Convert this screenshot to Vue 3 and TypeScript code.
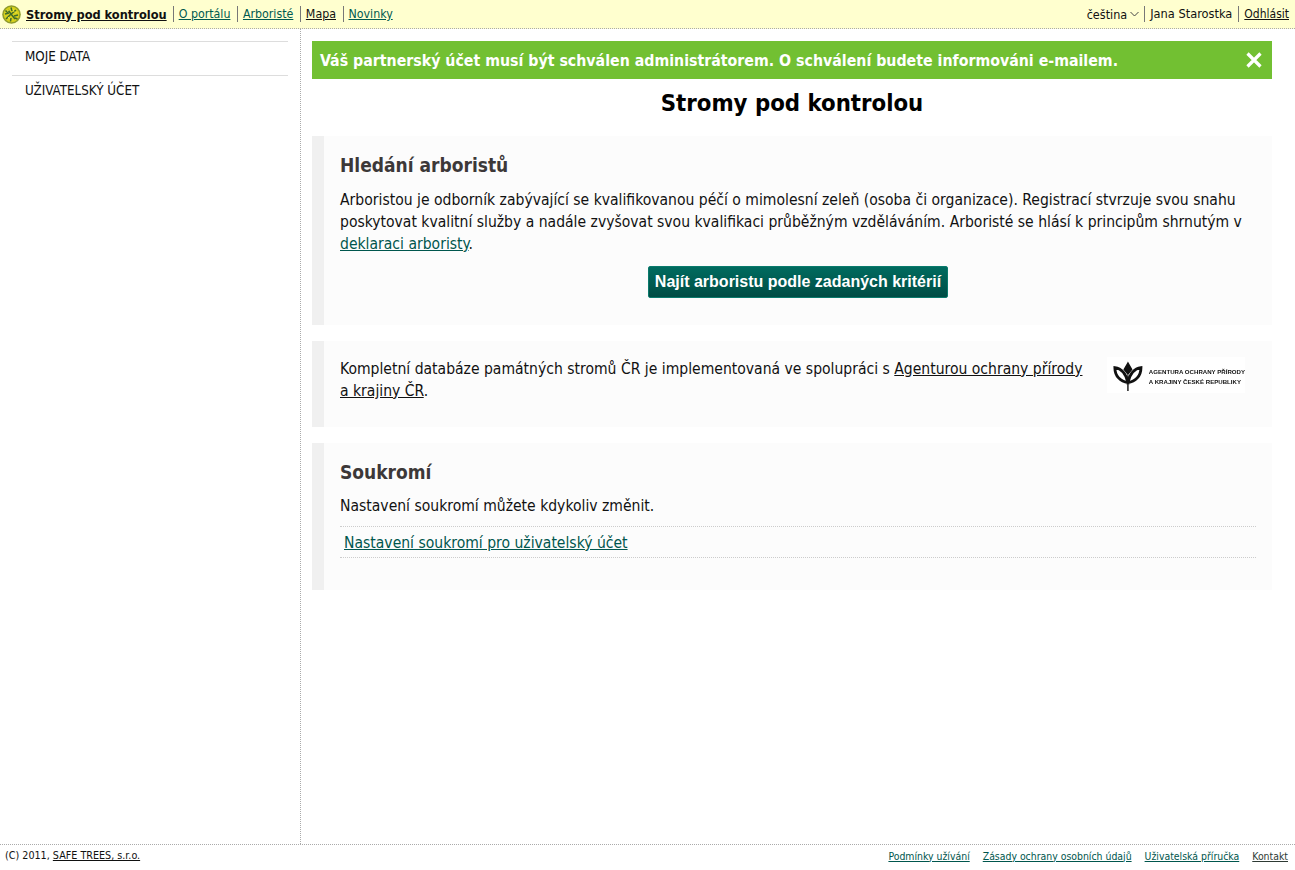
<script setup lang="ts">
const navLinks: { label: string; dark?: boolean }[] = [
  { label: 'O portálu' },
  { label: 'Arboristé' },
  { label: 'Mapa', dark: true },
  { label: 'Novinky' },
]
const sideItems: string[] = ['MOJE DATA', 'UŽIVATELSKÝ ÚČET']
const footerLinks: { label: string; dark?: boolean }[] = [
  { label: 'Podmínky užívání' },
  { label: 'Zásady ochrany osobních údajů' },
  { label: 'Uživatelská příručka' },
  { label: 'Kontakt', dark: true },
]
</script>

<template>
  <div class="page">
    <header class="topbar">
      <div class="top-left">
        <svg class="logo" width="19" height="19" viewBox="0 0 19 19">
          <circle cx="9.5" cy="9.5" r="9.3" fill="#8e9a2c" />
          <circle cx="9.5" cy="9.5" r="7.8" fill="#d6d01c" />
          <path d="M4 14 L8 10 L14 5 M6 5 L9 9 L13 14 M3 9 L7 8 M12 11 L16 10 M9 2.5 L10 6 M9 13 L8.5 16.5 M3.5 5.5 L6 8 M13 13 L15.5 14" stroke="#3f6a2a" stroke-width="1.5" fill="none" />
          <path d="M6 12 L8 14 M11 4 L12 7 M13 8 L15 7 M5 6 L7 5" stroke="#e8e23a" stroke-width="1" fill="none" />
        </svg>
        <a class="brand" href="#">Stromy pod kontrolou</a>
        <a v-for="l in navLinks" :key="l.label" class="nav" :class="{ dark: l.dark }" href="#">{{ l.label }}</a>
      </div>
      <div class="top-right">
        <span class="lang">čeština
          <svg width="9" height="6" viewBox="0 0 9 6"><path d="M0.5 1 L4.5 5 L8.5 1" fill="none" stroke="#444" stroke-width="1" /></svg>
        </span>
        <span class="sep user">Jana Starostka</span>
        <a class="sep dark-link" href="#">Odhlásit</a>
      </div>
    </header>

    <div class="body">
      <aside class="side">
        <ul class="side-list">
          <li v-for="s in sideItems" :key="s">{{ s }}</li>
        </ul>
      </aside>
      <main class="main">
        <div class="alert">
          <span>Váš partnerský účet musí být schválen administrátorem. O schválení budete informováni e-mailem.</span>
          <svg width="18" height="18" viewBox="0 0 18 18"><path d="M2.5 2.5 L15.5 15.5 M15.5 2.5 L2.5 15.5" stroke="#fff" stroke-width="3.2" /></svg>
        </div>
        <h1 class="title">Stromy pod kontrolou</h1>

        <section class="card first">
          <h2>Hledání arboristů</h2>
          <p>Arboristou je odborník zabývající se kvalifikovanou péčí o mimolesní zeleň (osoba či organizace). Registrací stvrzuje svou snahu poskytovat kvalitní služby a nadále zvyšovat svou kvalifikaci průběžným vzděláváním. Arboristé se hlásí k principům shrnutým v <a class="teal" href="#">deklaraci arboristy</a>.</p>
          <div class="btn-row"><button class="btn" type="button">Najít arboristu podle zadaných kritérií</button></div>
        </section>

        <section class="card second">
          <p>Kompletní databáze památných stromů ČR je implementovaná ve spolupráci s <a class="black" href="#">Agenturou ochrany přírody a krajiny ČR</a>.</p>
          <div class="aopk">
            <svg width="32" height="32" viewBox="0 0 32 32">
              <path d="M16 31 V14 M16 1 L12 8 L16 13 L20 8 Z" fill="#111" stroke="#111" stroke-width="1.5" />
              <path d="M2 6 C2 15 8 21 16 22 C14 13 10 7 2 6 Z M30 6 C30 15 24 21 16 22 C18 13 22 7 30 6 Z" fill="#fff" stroke="#111" stroke-width="3" />
            </svg>
            <div class="aopk-text">AGENTURA OCHRANY PŘÍRODY<br />A KRAJINY ČESKÉ REPUBLIKY</div>
          </div>
        </section>

        <section class="card third">
          <h2>Soukromí</h2>
          <p>Nastavení soukromí můžete kdykoliv změnit.</p>
          <div class="row-link"><a class="teal" href="#">Nastavení soukromí pro uživatelský účet</a></div>
        </section>
      </main>
    </div>

    <footer class="foot">
      <div>(C) 2011, <a class="black" href="#">SAFE TREES, s.r.o.</a></div>
      <nav class="foot-links">
        <a v-for="l in footerLinks" :key="l.label" :class="l.dark ? 'dim' : 'teal'" href="#">{{ l.label }}</a>
      </nav>
    </footer>
  </div>
</template>

<style>
html, body, #app { height: 100%; margin: 0; }
</style>

<style scoped>
.page {
  height: 870px;
  display: flex;
  flex-direction: column;
  font-family: "DejaVu Sans Condensed", "DejaVu Sans", sans-serif;
  color: #111;
  background: #fff;
}
a { color: #005a50; }
a.black, .black { color: #111; }
a.dim { color: #2e3a34; }
.teal { color: #00564d; }
.topbar {
  height: 28px;
  box-sizing: content-box;
  background: #ffffcf;
  border-bottom: 1px dotted #aaa;
  display: flex;
  align-items: center;
  justify-content: space-between;
  font-size: 12.3px;
  padding-right: 6px;
}
.top-left, .top-right { display: flex; align-items: center; }
.logo { margin: 0 5px 0 2px; }
.brand { font-weight: 700; color: #111; font-size: 12.7px; margin-right: 6px; }
.nav { border-left: 1px solid #777; padding: 0 6.5px 0 5px; line-height: 16px; }
.nav.dark { color: #111; }
.lang { font-size: 12.5px; padding-right: 5px; display: inline-flex; align-items: center; gap: 3px; }
.sep { border-left: 1px solid #777; padding: 0 5px; line-height: 16px; }
.user { font-size: 12.7px; padding-right: 6px; }
.dark-link { font-size: 12px; color: #111; padding-right: 0; }
.body { flex: 1; display: flex; min-height: 0; }
.side {
  border-right: 1px dotted #aaa;
  padding: 12px 12px 0 12px;
  box-sizing: content-box;
  width: 276px;
}
.side-list { list-style: none; margin: 0; padding: 0; font-size: 13.3px; }
.side-list li {
  border-top: 1px solid #ddd;
  padding: 7px 13px 0;
  height: 26px;
  line-height: 16px;
}
.main { flex: 1; padding: 12px 23px 0 11px; min-width: 0; }
.alert {
  height: 38px;
  background: #72c032;
  color: #fff;
  font-weight: 700;
  font-size: 15.77px;
  display: flex;
  align-items: center;
  justify-content: space-between;
  padding: 0 9px 0 8px;
}
.title { font-size: 23.7px; font-weight: 700; text-align: center; margin: 9px 0 18px; line-height: 30px; color: #000; }
.card {
  background: #fcfcfc;
  border-left: 12px solid #f0f0f0;
  padding: 16px 16px 0;
  margin-bottom: 16px;
  font-size: 15.55px;
  line-height: 22px;
}
.card h2 { margin: 0 0 9px; font-size: 19px; line-height: 26px; color: #3c3838; font-weight: 700; }
.card p { margin: 0; padding-top: 1px; margin-bottom: -1px; }
.first { height: 173px; }
.first h2 { margin-bottom: 10px; }
.btn-row { display: flex; justify-content: center; margin-top: 12px; }
.btn {
  height: 32px;
  width: 300px;
  padding: 0;
  border: 1px solid #0a7a6c;
  border-radius: 2px;
  background: linear-gradient(#006b5f 0, #00594f 60%, #004c44 100%);
  color: #fff;
  font: 700 16px "Liberation Sans", sans-serif;
}
.second { height: 70px; display: flex; gap: 17px; align-items: flex-start; padding-right: 27px; }
.second p { flex: 1; }
.aopk {
  width: 138px;
  flex: none;
  height: 36px;
  display: flex;
  align-items: center;
  gap: 6px;
  background: #fff;
  padding: 3px 0 0 6px;
  box-sizing: border-box;
  filter: blur(0.35px);
}
.aopk-text { font: 700 6.1px/10px "Liberation Sans", sans-serif; color: #111; white-space: nowrap; }
.third { height: 131px; }
.row-link {
  margin-top: 10px;
  border-top: 1px dotted #ccc;
  border-bottom: 1px dotted #ccc;
  padding: 5px 4px 3px;
}
.foot {
  height: 26px;
  border-top: 1px dotted #aaa;
  display: flex;
  align-items: center;
  justify-content: space-between;
  font-size: 10.7px;
  padding: 0 7px 4px 5px;
  box-sizing: border-box;
}
.foot-links { display: flex; gap: 13px; font-size: 10.4px; }
</style>
